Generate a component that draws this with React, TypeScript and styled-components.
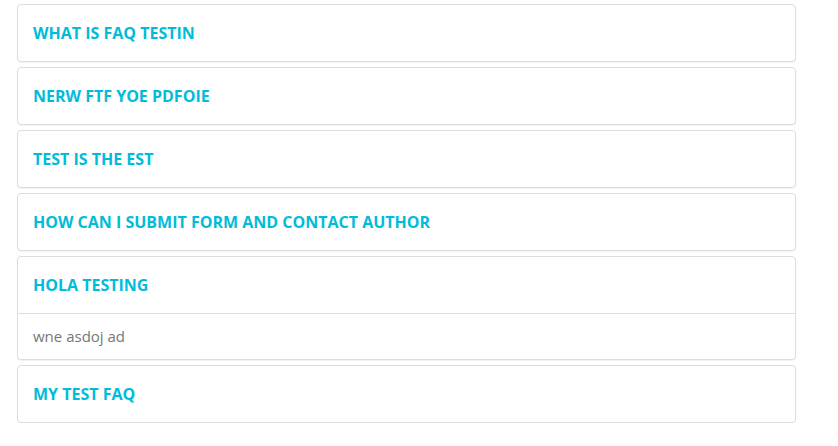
import React, { useState } from 'react';
import styled, { createGlobalStyle } from 'styled-components';

const GlobalStyle = createGlobalStyle`
  * {
    box-sizing: border-box;
  }

  body {
    margin: 0;
    background: #fff;
    font-family: "Open Sans", "Liberation Sans", sans-serif;
  }
`;

const Page = styled.div`
  padding: 4px 42px 0 17px;
`;

const PanelGroup = styled.div`
  display: flex;
  flex-direction: column;
  gap: 5px;
`;

const Panel = styled.div`
  border: 1px solid #ddd;
  border-radius: 4px;
  background-color: #fff;
  box-shadow: 0 1px 1px rgba(0, 0, 0, 0.05);
  overflow: hidden;
`;

const Heading = styled.button`
  display: block;
  width: 100%;
  padding: 16px 15px;
  border: none;
  background: transparent;
  text-align: left;
  cursor: pointer;
  font-family: inherit;
  font-size: 16px;
  font-weight: 700;
  line-height: 24px;
  text-transform: uppercase;
  color: #00bcd9;
`;

const Body = styled.div`
  border-top: 1px solid #ddd;
  padding: 12px 15px;
  font-size: 15px;
  line-height: 21px;
  color: #777;
`;

interface Faq {
  question: string;
  answer: string;
}

const faqs: Faq[] = [
  { question: 'What is faq testin', answer: '' },
  { question: 'nerw ftf yoe pdfoie', answer: '' },
  { question: 'test is the est', answer: '' },
  { question: 'How can I submit form and contact author', answer: '' },
  { question: 'Hola testing', answer: 'wne asdoj ad' },
  { question: 'my test faq', answer: '' },
];

const App = () => {
  const [open, setOpen] = useState<number | null>(4);

  return (
    <>
      <GlobalStyle />
      <Page>
        <PanelGroup>
          {faqs.map((faq, i) => (
            <Panel key={faq.question}>
              <Heading onClick={() => setOpen(open === i ? null : i)}>{faq.question}</Heading>
              {open === i && <Body>{faq.answer}</Body>}
            </Panel>
          ))}
        </PanelGroup>
      </Page>
    </>
  );
};

export default App;
